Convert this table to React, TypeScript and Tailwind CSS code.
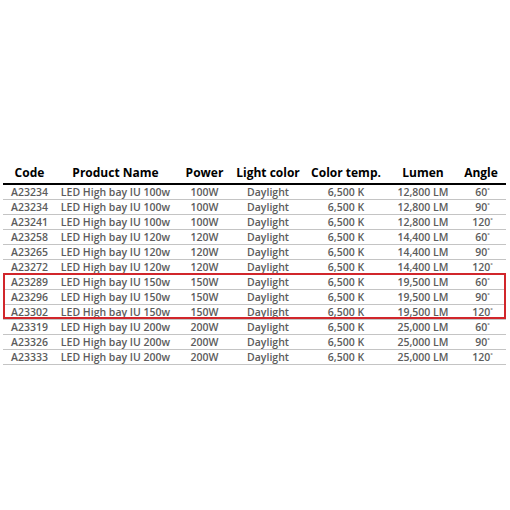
const rows = [
  ["A23234", "LED High bay IU 100w", "100W", "12,800 LM", "60"],
  ["A23234", "LED High bay IU 100w", "100W", "12,800 LM", "90"],
  ["A23241", "LED High bay IU 100w", "100W", "12,800 LM", "120"],
  ["A23258", "LED High bay IU 120w", "120W", "14,400 LM", "60"],
  ["A23265", "LED High bay IU 120w", "120W", "14,400 LM", "90"],
  ["A23272", "LED High bay IU 120w", "120W", "14,400 LM", "120"],
  ["A23289", "LED High bay IU 150w", "150W", "19,500 LM", "60"],
  ["A23296", "LED High bay IU 150w", "150W", "19,500 LM", "90"],
  ["A23302", "LED High bay IU 150w", "150W", "19,500 LM", "120"],
  ["A23319", "LED High bay IU 200w", "200W", "25,000 LM", "60"],
  ["A23326", "LED High bay IU 200w", "200W", "25,000 LM", "90"],
  ["A23333", "LED High bay IU 200w", "200W", "25,000 LM", "120"],
];

const cols = "grid grid-cols-[53px_119px_59px_68px_88px_66px_50px]";

function Row({ r }: { r: string[] }) {
  return (
    <div className={`${cols} h-[15px] items-center border-b border-[#c4c4c4] text-center text-[10.5px] leading-none font-semibold text-[#5c5c5c]`}>
      <span>{r[0]}</span>
      <span>{r[1]}</span>
      <span>{r[2]}</span>
      <span>Daylight</span>
      <span>6,500 K</span>
      <span>{r[3]}</span>
      <span className="pl-[3px]">
        {r[4]}
        <sup className="relative -top-[1px] text-[8px] font-bold">˚</sup>
      </span>
    </div>
  );
}

export default function App() {
  return (
    <div
      className="h-[510px] w-[510px] bg-white pt-[162px] pl-[3px]"
      style={{ fontFamily: '"Open Sans", "Noto Sans", sans-serif' }}
    >
      <div className="w-[503px]">
        <div className={`${cols} h-[23px] items-center border-b-2 border-black text-center text-[12px] leading-none font-bold text-black`}>
          <span>Code</span>
          <span>Product Name</span>
          <span>Power</span>
          <span>Light color</span>
          <span>Color temp.</span>
          <span>Lumen</span>
          <span>Angle</span>
        </div>
        {rows.slice(0, 6).map((r, i) => (
          <Row key={i} r={r} />
        ))}
        <div className="relative">
          {rows.slice(6, 9).map((r, i) => (
            <Row key={i} r={r} />
          ))}
          <span className="pointer-events-none absolute -top-[2px] left-0 right-0 bottom-[1px] border-2 border-[#d1262b]" />
        </div>
        {rows.slice(9).map((r, i) => (
          <Row key={i} r={r} />
        ))}
      </div>
    </div>
  );
}
